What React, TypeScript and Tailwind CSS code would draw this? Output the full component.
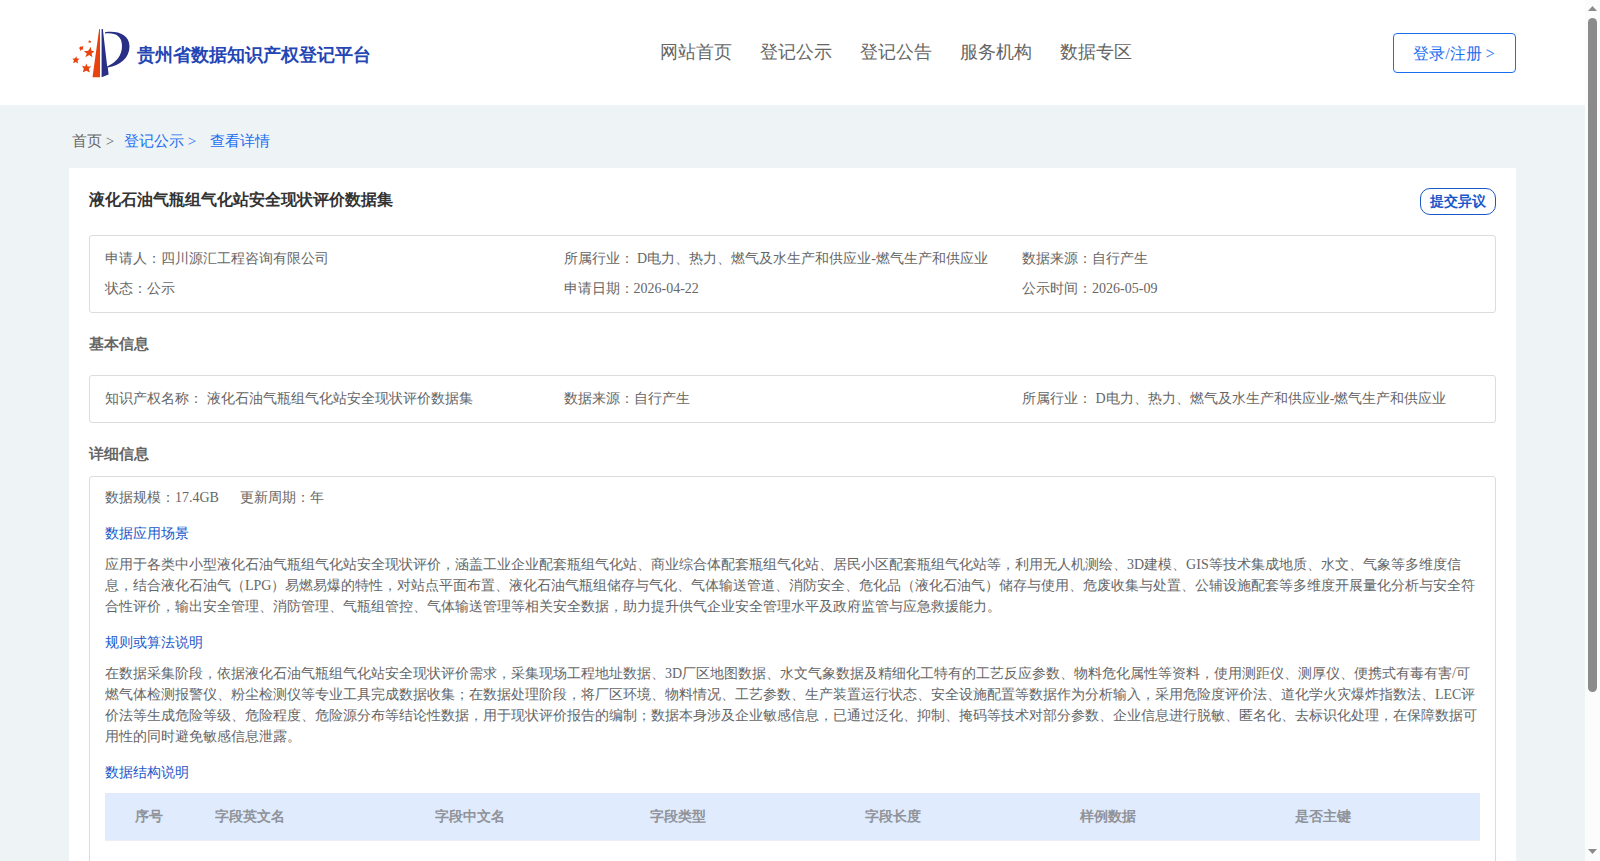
import React from "react";

const NAV = ["网站首页", "登记公示", "登记公告", "服务机构", "数据专区"];

const COLUMNS = ["字段英文名", "字段中文名", "字段类型", "字段长度", "样例数据", "是否主键"];

function Logo() {
  return (
    <svg className="h-[58px] w-[69px] shrink-0" viewBox="0 0 69 58">
      <path d="M31.2 5 L24.5 53.2 H32 V5 Z" fill="#e8430f" />
      <path
        d="M33.6 5 V53.2 L40.6 50.6 L39.8 43.6 C52 41.5 61.5 34 61.5 22.5 C61.5 10 49 6.4 37 8.2 V9.4 C47 8.4 54 11.5 54 22 C54 32 48 38.5 39.2 42.4 L34.8 5 Z"
        fill="#2a2f86"
      />
      <g fill="#e8430f">
        <polygon points="22.9,22.8 23.2,26.4 26.4,27.4 23.6,29.4 24.4,33.2 21.3,31.1 17.4,33.2 18.8,29.6 15.8,27.2 20.2,26.7" />
        <polygon points="18.2,39.6 19.6,42.4 23.2,42.4 20.8,44.8 21.8,48.6 18.4,46.8 14.8,48.2 15.8,44.8 14,41.8 17.2,42.4" />
        <polygon points="8.2,32.2 9,34.4 11.6,34.8 9.6,36.6 10,39.4 7.8,38 5,39.2 6,36.6 4.4,34.4 7,34.4" />
        <polygon points="12,22.4 13.6,22.8 15.5,21.8 14.9,24 15.5,25.6 13.6,25.6 12,27 12,25 10.6,23.8 12,23.6" />
        <polygon points="21.6,16 22.3,16.9 23.4,17.2 22.6,18 22.6,19 21.5,18.5 20.4,18.8 20.7,17.7 20.3,16.8 21.3,16.9" />
      </g>
    </svg>
  );
}

function InfoBox({ items }: { items: string[] }) {
  return (
    <div className="grid grid-cols-3 rounded-[3px] border border-[#dcdcdc] py-2 pr-[14.4px] pl-[15px] text-sm leading-[30px]">
      {items.map((t) => (
        <div key={t} className="whitespace-nowrap">{t}</div>
      ))}
    </div>
  );
}

function Scrollbar() {
  return (
    <div className="flex w-[15px] shrink-0 flex-col items-center bg-[#fcfcfc]">
      <svg className="h-[18px] w-[15px] shrink-0" viewBox="0 0 15 18">
        <path d="M3 11 L7.5 6 L12 11 Z" fill="#8b8b8b" />
      </svg>
      <div className="h-[674px] w-[9px] rounded-full bg-[#8b8b8b]" />
      <svg className="mt-auto h-[18px] w-[15px] shrink-0" viewBox="0 0 15 18">
        <path d="M3 6 L7.5 11 L12 6 Z" fill="#8b8b8b" />
      </svg>
    </div>
  );
}

export default function App() {
  return (
    <div className="flex h-[861px] w-[1600px] overflow-hidden bg-[#eef3f6] font-['Liberation_Serif',serif] text-[#666666]">
      <div className="flex min-w-0 flex-1 flex-col">
        <header className="flex h-[105px] shrink-0 items-start bg-white pl-[68px] pr-[69px]">
          <div className="flex w-[592px] items-center pt-6">
            <Logo />
            <span className="pt-1 text-lg leading-[22px] font-bold whitespace-nowrap text-[#2446b4]">贵州省数据知识产权登记平台</span>
          </div>
          <nav className="flex gap-7 pt-[41px] text-lg leading-[22px] whitespace-nowrap">
            {NAV.map((n) => (
              <a key={n}>{n}</a>
            ))}
          </nav>
          <button className="mt-[33px] ml-auto h-10 w-[123px] rounded border border-[#1a6ff0] pt-0.5 pr-px text-base whitespace-nowrap text-[#1a6ff0]">
            登录/注册 &gt;
          </button>
        </header>
        <div className="flex h-[63px] shrink-0 items-center pl-[72px] pt-[9px] text-[15px] leading-[22px] text-[#1a6ff0]">
          <span className="w-[52px] text-[#666666]">首页 &gt;</span>
          <span className="w-[86px]">登记公示 &gt;</span>
          <span>查看详情</span>
        </div>
        <main className="ml-[69px] w-[1447px] shrink-0 bg-white px-5">
          <div className="flex h-[67px] items-start justify-between pt-5">
            <h1 className="text-base leading-6 font-bold text-[#333333]">液化石油气瓶组气化站安全现状评价数据集</h1>
            <button className="h-[27px] w-[76px] rounded-[10px] border border-[#1a57c9] text-sm leading-[25px] font-bold whitespace-nowrap text-[#1a57c9]">
              提交异议
            </button>
          </div>
          <InfoBox
            items={[
              "申请人：四川源汇工程咨询有限公司",
              "所属行业： D电力、热力、燃气及水生产和供应业-燃气生产和供应业",
              "数据来源：自行产生",
              "状态：公示",
              "申请日期：2026-04-22",
              "公示时间：2026-05-09",
            ]}
          />
          <h2 className="h-[62px] text-[15px] leading-[62px] font-bold">基本信息</h2>
          <InfoBox
            items={[
              "知识产权名称： 液化石油气瓶组气化站安全现状评价数据集",
              "数据来源：自行产生",
              "所属行业： D电力、热力、燃气及水生产和供应业-燃气生产和供应业",
            ]}
          />
          <h2 className="h-[53px] text-[15px] leading-[62px] font-bold">详细信息</h2>
          <section className="h-[420px] rounded-[3px] border border-[#dcdcdc] px-[15px] pt-[10px] text-sm leading-[21px]">
            <div className="flex gap-[21px]">
              <span>数据规模：17.4GB</span>
              <span>更新周期：年</span>
            </div>
            <h3 className="mt-[15px] mb-[10px] text-[#1a57c9]">数据应用场景</h3>
            <p>
              应用于各类中小型液化石油气瓶组气化站安全现状评价，涵盖工业企业配套瓶组气化站、商业综合体配套瓶组气化站、居民小区配套瓶组气化站等，利用无人机测绘、3D建模、GIS等技术集成地质、水文、气象等多维度信息，结合液化石油气（LPG）易燃易爆的特性，对站点平面布置、液化石油气瓶组储存与气化、气体输送管道、消防安全、危化品（液化石油气）储存与使用、危废收集与处置、公辅设施配套等多维度开展量化分析与安全符合性评价，输出安全管理、消防管理、气瓶组管控、气体输送管理等相关安全数据，助力提升供气企业安全管理水平及政府监管与应急救援能力。
            </p>
            <h3 className="mt-[15px] mb-[10px] text-[#1a57c9]">规则或算法说明</h3>
            <p>
              在数据采集阶段，依据液化石油气瓶组气化站安全现状评价需求，采集现场工程地址数据、3D厂区地图数据、水文气象数据及精细化工特有的工艺反应参数、物料危化属性等资料，使用测距仪、测厚仪、便携式有毒有害/可燃气体检测报警仪、粉尘检测仪等专业工具完成数据收集；在数据处理阶段，将厂区环境、物料情况、工艺参数、生产装置运行状态、安全设施配置等数据作为分析输入，采用危险度评价法、道化学火灾爆炸指数法、LEC评价法等生成危险等级、危险程度、危险源分布等结论性数据，用于现状评价报告的编制；数据本身涉及企业敏感信息，已通过泛化、抑制、掩码等技术对部分参数、企业信息进行脱敏、匿名化、去标识化处理，在保障数据可用性的同时避免敏感信息泄露。
            </p>
            <h3 className="mt-[15px] mb-[10px] text-[#1a57c9]">数据结构说明</h3>
            <div className="flex h-12 items-center overflow-hidden border-b border-[#ebeef5] bg-[#e0ecfe] font-bold text-[#909399]">
              <span className="w-[110px] shrink-0 pl-[30px]">序号</span>
              {COLUMNS.map((c, i) => (
                <span key={c} className={i === 0 ? "w-[220px] shrink-0" : "w-[215px] shrink-0"}>{c}</span>
              ))}
            </div>
          </section>
        </main>
      </div>
      <Scrollbar />
    </div>
  );
}
